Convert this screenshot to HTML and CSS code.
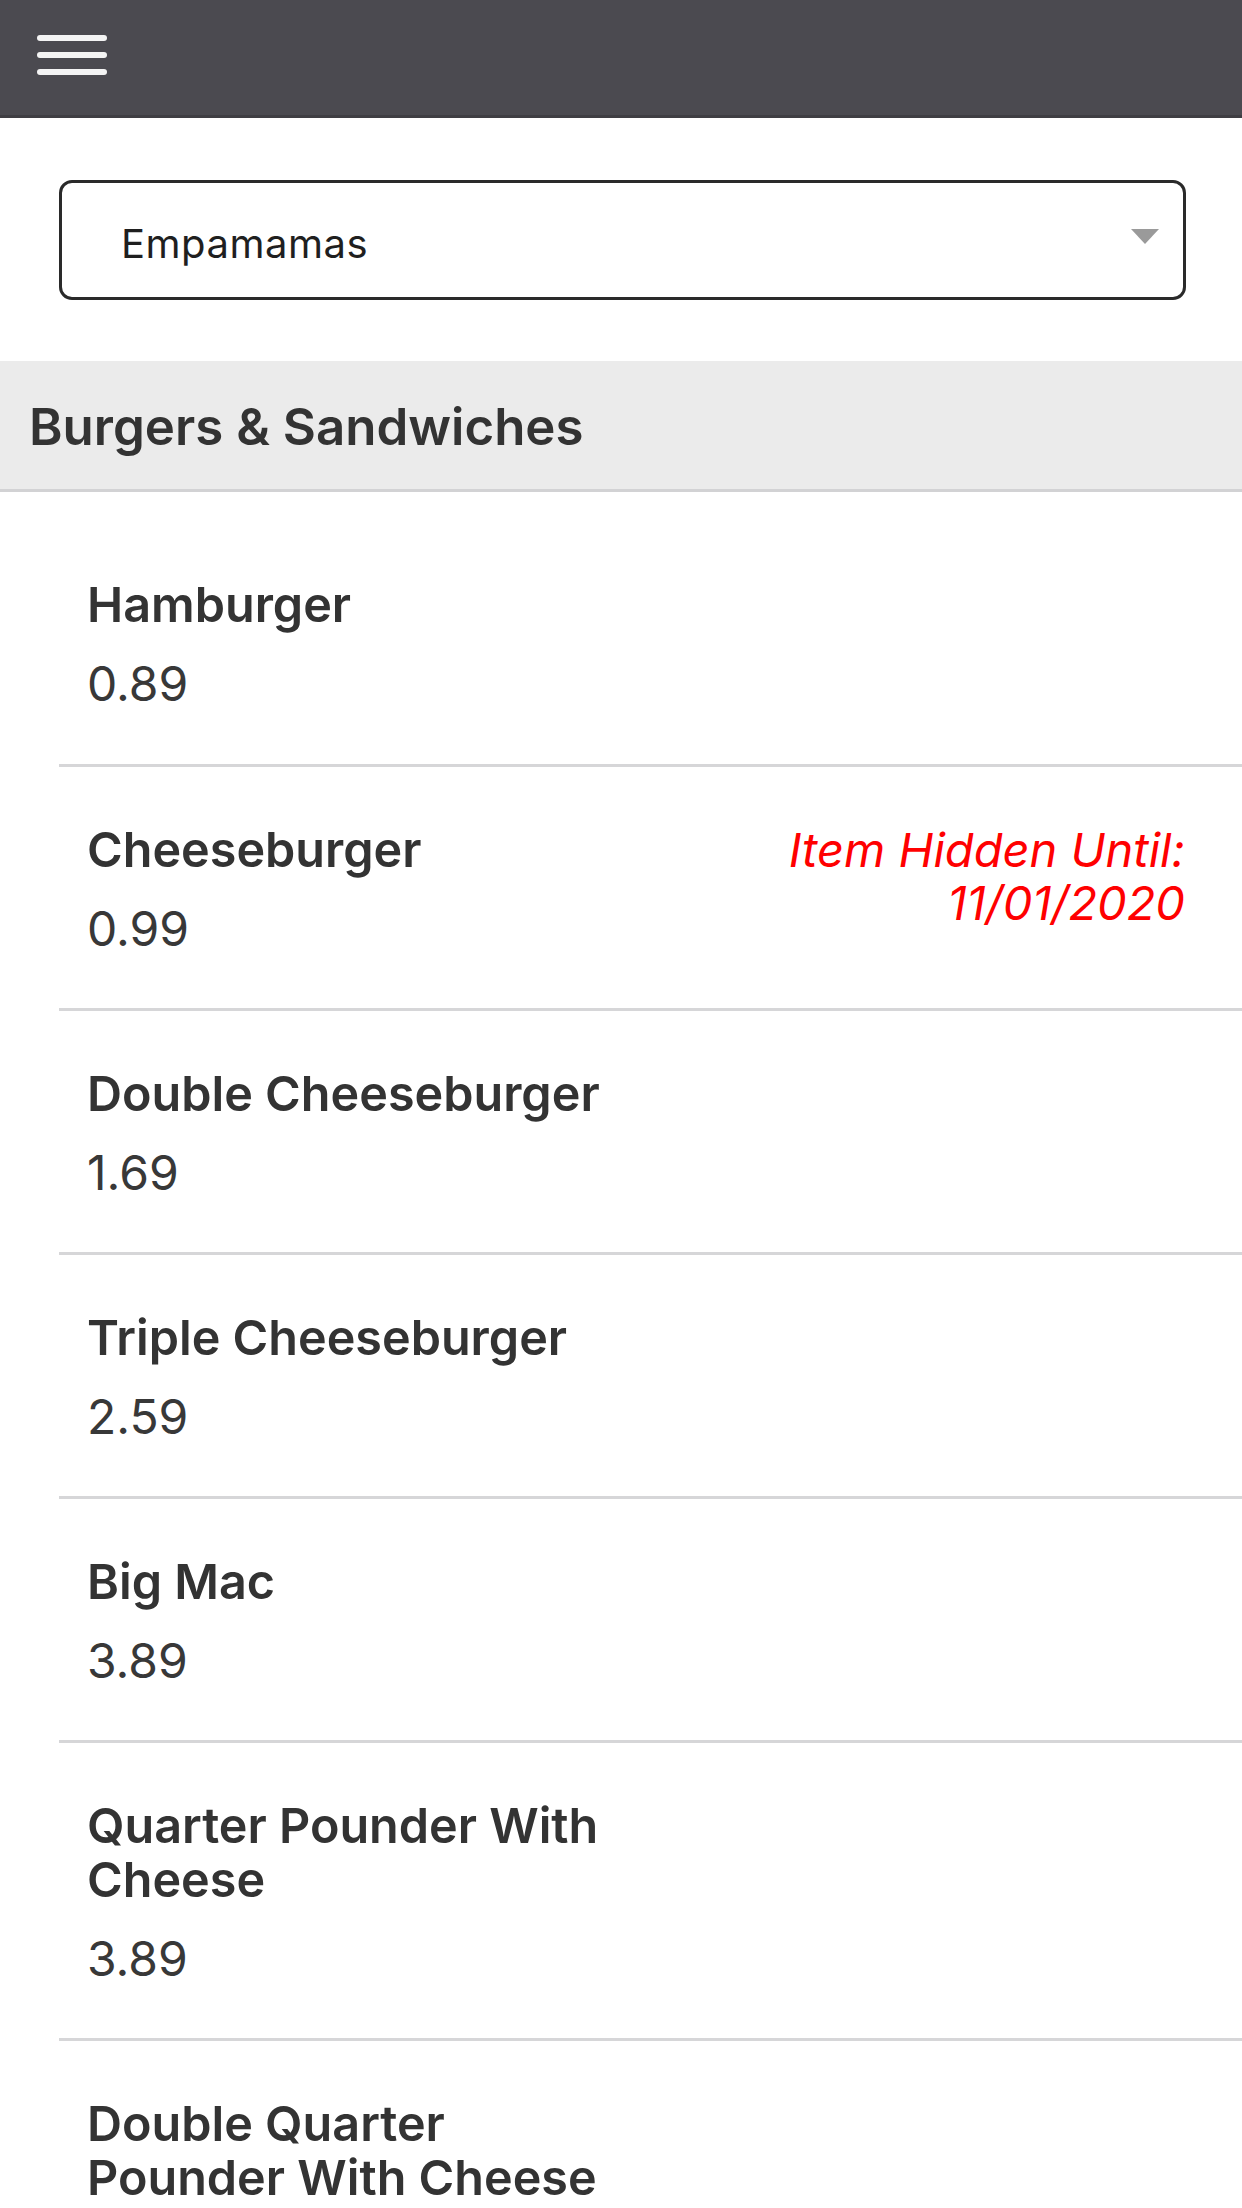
FILE: index.html
```html
<!DOCTYPE html>
<html lang="en">
<head>
<meta charset="utf-8">
<title>Menu</title>
<link rel="stylesheet" href="styles.css">
</head>
<body>
<header class="topbar">
  <button class="burger" aria-label="Menu">
    <span></span><span></span><span></span>
  </button>
</header>

<div class="picker">
  <div class="select">
    <span class="select-text">Empamamas</span>
    <span class="caret"></span>
  </div>
</div>

<section class="category">
  <h2 class="category-title">Burgers &amp; Sandwiches</h2>
</section>

<ul class="items">
  <li class="item">
    <div class="item-main"><div class="name">Hamburger</div><div class="price">0.89</div></div>
    <div class="item-side"></div>
  </li>
  <li class="item">
    <div class="item-main"><div class="name">Cheeseburger</div><div class="price">0.99</div></div>
    <div class="item-side"><div class="hidden-note">Item Hidden Until: 11/01/2020</div></div>
  </li>
  <li class="item">
    <div class="item-main"><div class="name">Double Cheeseburger</div><div class="price">1.69</div></div>
    <div class="item-side"></div>
  </li>
  <li class="item">
    <div class="item-main"><div class="name">Triple Cheeseburger</div><div class="price">2.59</div></div>
    <div class="item-side"></div>
  </li>
  <li class="item">
    <div class="item-main"><div class="name">Big Mac</div><div class="price">3.89</div></div>
    <div class="item-side"></div>
  </li>
  <li class="item">
    <div class="item-main"><div class="name">Quarter Pounder With Cheese</div><div class="price">3.89</div></div>
    <div class="item-side"></div>
  </li>
  <li class="item">
    <div class="item-main"><div class="name">Double Quarter Pounder With Cheese</div></div>
    <div class="item-side"></div>
  </li>
</ul>
</body>
</html>
```

FILE: styles.css
```css
* { box-sizing: border-box; }

html, body {
  margin: 0;
  padding: 0;
  background: #ffffff;
}

body {
  font-family: Inter, "Liberation Sans", sans-serif;
  color: #333333;
  width: 1242px;
  height: 2208px;
  overflow: hidden;
}

.topbar {
  height: 118px;
  background: #4b4a50;
  border-bottom: 3px solid #3f3e43;
  padding: 35px 0 0 37px;
}

.burger {
  display: flex;
  flex-direction: column;
  gap: 11px;
  width: 70px;
  padding: 0;
  margin: 0;
  border: 0;
  background: transparent;
}

.burger span {
  display: block;
  height: 6px;
  width: 70px;
  border-radius: 3px;
  background: #f4f4f4;
}

.picker {
  padding: 62px 56px 61px 59px;
}

.select {
  height: 120px;
  border: 3px solid #2a2a2a;
  border-radius: 13px;
  display: flex;
  align-items: center;
  justify-content: space-between;
  padding: 0 24px 0 59px;
}

.select-text {
  font-size: 40px;
  color: #1f1f1f;
  font-weight: 400;
  letter-spacing: 0.5px;
  position: relative;
  top: 3px;
}

.caret {
  width: 0;
  height: 0;
  border-left: 14px solid transparent;
  border-right: 14px solid transparent;
  border-top: 15px solid #9a9a9a;
  margin-top: -8px;
}

.category {
  background: #ebebeb;
  border-bottom: 3px solid #d2d2d4;
  height: 131px;
  display: flex;
  align-items: center;
  padding: 0 0 0 29px;
}

.category-title {
  margin: 0;
  font-size: 51px;
  font-weight: 600;
  color: #333333;
  line-height: 56px;
  position: relative;
  top: 2px;
}

.items {
  list-style: none;
  margin: 0;
  padding: 33px 0 0 59px;
}

.item {
  display: flex;
  padding: 56px 57px 52px 28px;
  border-top: 3px solid #d6d6d8;
}

.item:first-child {
  border-top: 0;
  padding-top: 53px;
  padding-bottom: 53px;
}

.item-main {
  flex: 1 1 50%;
  min-width: 0;
}

.item-side {
  flex: 1 1 50%;
  min-width: 0;
  text-align: right;
}

.name {
  font-size: 48.5px;
  font-weight: 600;
  line-height: 54px;
  color: #333333;
}

.price {
  margin-top: 25px;
  font-size: 48px;
  font-weight: 400;
  line-height: 54px;
  color: #383838;
}

.hidden-note {
  font-size: 47px;
  font-style: italic;
  line-height: 53px;
  color: #ff0000;
  padding-left: 144px;
}
```
